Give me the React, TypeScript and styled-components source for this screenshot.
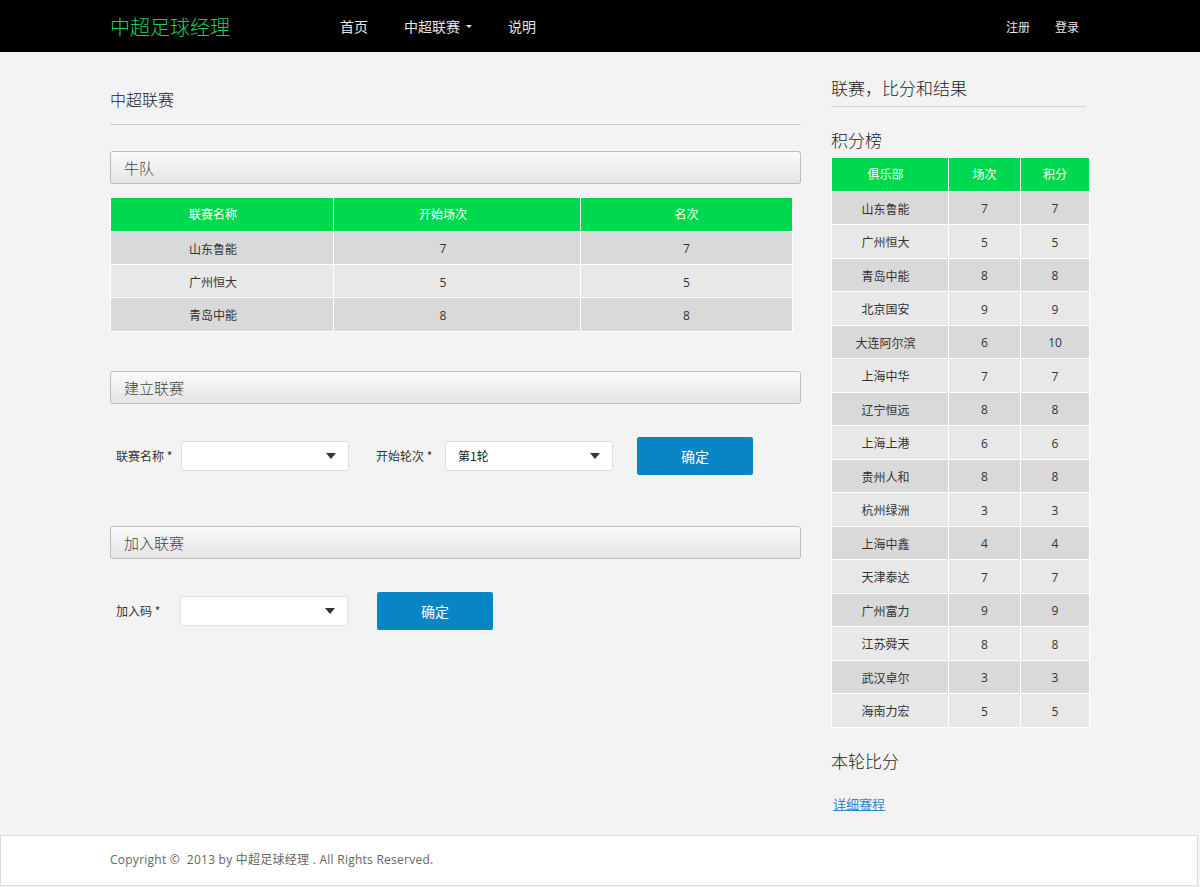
import React from "react";
import styled, { createGlobalStyle } from "styled-components";

const Global = createGlobalStyle`
  html, body { margin: 0; padding: 0; }
  body {
    background: #f3f3f3;
    font-family: "Open Sans", "Noto Sans CJK SC", sans-serif;
    color: #333;
  }
  * { box-sizing: border-box; }
`;

const Navbar = styled.div`
  height: 52px;
  background: #000;
`;

const NavInner = styled.div`
  width: 980px;
  margin: 0 auto;
  height: 52px;
  display: flex;
  align-items: center;
`;

const Brand = styled.div`
  font-family: "Noto Sans CJK SC", sans-serif;
  font-size: 20px;
  font-weight: 300;
  color: #1ed05a;
  width: 212px;
`;

const NavList = styled.div`
  display: flex;
  align-items: center;
  flex: 1;
`;

const NavItem = styled.div`
  font-family: "Noto Sans CJK SC", sans-serif;
  font-size: 14px;
  color: #e8e8e8;
  padding: 0 18px;
  display: flex;
  align-items: center;
`;

const Caret = styled.span`
  display: inline-block;
  width: 0;
  height: 0;
  border-left: 3px solid transparent;
  border-right: 3px solid transparent;
  border-top: 3px solid #e8e8e8;
  margin-left: 6px;
  margin-top: 1px;
`;

const NavRight = styled.div`
  display: flex;
  gap: 25px;
  padding-right: 11px;
`;

const NavSmall = styled.div`
  font-family: "Noto Sans CJK SC", sans-serif;
  font-size: 12px;
  color: #e8e8e8;
`;

const Container = styled.div`
  width: 980px;
  margin: 0 auto;
  display: flex;
  gap: 30px;
`;

const Main = styled.div`
  width: 691px;
  padding-top: 36px;
`;

const PageTitle = styled.div`
  font-family: "Noto Sans CJK SC", sans-serif;
  font-size: 16px;
  font-weight: 300;
  line-height: 22px;
  color: #222;
  padding-bottom: 14px;
  border-bottom: 1px solid #cfcfcf;
`;

const PanelHead = styled.div<{ $mt: number }>`
  margin-top: ${(p) => p.$mt}px;
  height: 33px;
  border: 1px solid #bcbcbc;
  border-radius: 3px;
  background: linear-gradient(#fbfbfb, #e4e4e4);
  font-family: "Noto Sans CJK SC", sans-serif;
  font-size: 15px;
  font-weight: 300;
  color: #444;
  display: flex;
  align-items: center;
  padding-left: 13px;
`;

const Table = styled.table<{ $w: number; $mt: number }>`
  width: ${(p) => p.$w}px;
  margin-top: ${(p) => p.$mt}px;
  border-collapse: collapse;
  font-family: "Open Sans", "Noto Sans CJK SC", sans-serif;
  font-size: 12px;
`;

const Th = styled.th<{ $w?: number; $pr?: number }>`
  background: #00d94f;
  color: #fff;
  font-weight: normal;
  height: 33px;
  border: 1px solid #fff;
  border-top: none;
  ${(p) => (p.$w ? `width: ${p.$w}px;` : "")}
  text-align: center;
  padding: 0 ${(p) => p.$pr ?? 0}px 0 0;
`;

const Tr = styled.tr<{ $alt: boolean }>`
  background: ${(p) => (p.$alt ? "#e8e8e8" : "#d9d9d9")};
`;

const Td = styled.td<{ $h: number; $pr?: number }>`
  height: ${(p) => p.$h}px;
  border: 1px solid #fff;
  text-align: center;
  color: #333;
  padding: 2px ${(p) => p.$pr ?? 0}px 0 0;
`;

const FormRow = styled.div<{ $mt: number }>`
  margin-top: ${(p) => p.$mt}px;
  display: flex;
  align-items: center;
  height: 38px;
  padding-left: 6px;
`;

const Label = styled.div<{ $w: number }>`
  font-family: "Noto Sans CJK SC", sans-serif;
  font-size: 12px;
  color: #333;
  width: ${(p) => p.$w}px;
`;

const Select = styled.div<{ $mr: number }>`
  width: 168px;
  height: 30px;
  background: #fff;
  border: 1px solid #e0e0e0;
  border-radius: 2px;
  margin-right: ${(p) => p.$mr}px;
  display: flex;
  align-items: center;
  padding: 0 12px;
  font-family: "Noto Sans CJK SC", sans-serif;
  font-size: 12px;
  color: #222;
`;

const SelectText = styled.span`
  flex: 1;
`;

const Arrow = styled.span`
  width: 0;
  height: 0;
  border-left: 5px solid transparent;
  border-right: 5px solid transparent;
  border-top: 6px solid #333;
`;

const Button = styled.div`
  width: 116px;
  height: 38px;
  background: #0785c4;
  border-radius: 2px;
  color: #fff;
  font-family: "Noto Sans CJK SC", sans-serif;
  font-size: 14px;
  display: flex;
  align-items: center;
  justify-content: center;
`;

const Side = styled.div`
  width: 259px;
  padding-top: 24px;
`;

const SideTitle = styled.div`
  font-family: "Noto Sans CJK SC", sans-serif;
  font-size: 17px;
  font-weight: 300;
  line-height: 24px;
  color: #222;
  width: 255px;
  padding-bottom: 6px;
  border-bottom: 1px solid #d6d6d6;
`;

const SubTitle = styled.div<{ $mt: number }>`
  font-family: "Noto Sans CJK SC", sans-serif;
  font-size: 17px;
  font-weight: 300;
  line-height: 24px;
  color: #222;
  margin-top: ${(p) => p.$mt}px;
`;

const Link = styled.a`
  display: block;
  margin-top: 21px;
  font-family: "Noto Sans CJK SC", sans-serif;
  font-size: 13px;
  color: #2a8ad0;
  text-decoration: underline;
  padding-left: 2px;
`;

const Footer = styled.div`
  margin-top: 22px;
  height: 51px;
  background: #fff;
  border: 1px solid #dcdcdc;
  margin-right: 2px;
`;

const FooterInner = styled.div`
  width: 980px;
  margin: 0 auto;
  height: 49px;
  display: flex;
  align-items: center;
  padding-left: 1px;
  padding-bottom: 2px;
  font-family: "Open Sans", "Noto Sans CJK SC", sans-serif;
  font-size: 12px;
  letter-spacing: 0.25px;
  color: #666;
`;

const teams: [string, number, number][] = [
  ["山东鲁能", 7, 7],
  ["广州恒大", 5, 5],
  ["青岛中能", 8, 8],
];

const standings: [string, number, number][] = [
  ["山东鲁能", 7, 7],
  ["广州恒大", 5, 5],
  ["青岛中能", 8, 8],
  ["北京国安", 9, 9],
  ["大连阿尔滨", 6, 10],
  ["上海中华", 7, 7],
  ["辽宁恒远", 8, 8],
  ["上海上港", 6, 6],
  ["贵州人和", 8, 8],
  ["杭州绿洲", 3, 3],
  ["上海中鑫", 4, 4],
  ["天津泰达", 7, 7],
  ["广州富力", 9, 9],
  ["江苏舜天", 8, 8],
  ["武汉卓尔", 3, 3],
  ["海南力宏", 5, 5],
];

export default function App() {
  return (
    <>
      <Global />
      <Navbar>
        <NavInner>
          <Brand>中超足球经理</Brand>
          <NavList>
            <NavItem>首页</NavItem>
            <NavItem>
              中超联赛
              <Caret />
            </NavItem>
            <NavItem>说明</NavItem>
          </NavList>
          <NavRight>
            <NavSmall>注册</NavSmall>
            <NavSmall>登录</NavSmall>
          </NavRight>
        </NavInner>
      </Navbar>
      <Container>
        <Main>
          <PageTitle>中超联赛</PageTitle>
          <PanelHead $mt={26}>牛队</PanelHead>
          <Table $w={683} $mt={14}>
            <thead>
              <tr>
                <Th $w={223} $pr={18}>联赛名称</Th>
                <Th $w={247} $pr={28}>开始场次</Th>
                <Th>名次</Th>
              </tr>
            </thead>
            <tbody>
              {teams.map((t, i) => (
                <Tr key={t[0]} $alt={i % 2 === 1}>
                  <Td $h={33.4} $pr={18}>{t[0]}</Td>
                  <Td $h={33.4} $pr={28}>{t[1]}</Td>
                  <Td $h={33.4}>{t[2]}</Td>
                </Tr>
              ))}
            </tbody>
          </Table>
          <PanelHead $mt={39}>建立联赛</PanelHead>
          <FormRow $mt={33}>
            <Label $w={65}>联赛名称 *</Label>
            <Select $mr={27}>
              <SelectText />
              <Arrow />
            </Select>
            <Label $w={69}>开始轮次 *</Label>
            <Select $mr={24}>
              <SelectText>第1轮</SelectText>
              <Arrow />
            </Select>
            <Button>确定</Button>
          </FormRow>
          <PanelHead $mt={51}>加入联赛</PanelHead>
          <FormRow $mt={33}>
            <Label $w={64}>加入码 *</Label>
            <Select $mr={29}>
              <SelectText />
              <Arrow />
            </Select>
            <Button>确定</Button>
          </FormRow>
        </Main>
        <Side>
          <SideTitle>联赛，比分和结果</SideTitle>
          <SubTitle $mt={21}>积分榜</SubTitle>
          <Table $w={259} $mt={6}>
            <thead>
              <tr>
                <Th $w={117} $pr={9}>俱乐部</Th>
                <Th $w={72}>场次</Th>
                <Th>积分</Th>
              </tr>
            </thead>
            <tbody>
              {standings.map((t, i) => (
                <Tr key={t[0]} $alt={i % 2 === 1}>
                  <Td $h={33.5} $pr={9}>{t[0]}</Td>
                  <Td $h={33.5}>{t[1]}</Td>
                  <Td $h={33.5}>{t[2]}</Td>
                </Tr>
              ))}
            </tbody>
          </Table>
          <SubTitle $mt={21}>本轮比分</SubTitle>
          <Link href="#">详细赛程</Link>
        </Side>
      </Container>
      <Footer>
        <FooterInner>Copyright ©&nbsp; 2013 by 中超足球经理 . All Rights Reserved.</FooterInner>
      </Footer>
    </>
  );
}
